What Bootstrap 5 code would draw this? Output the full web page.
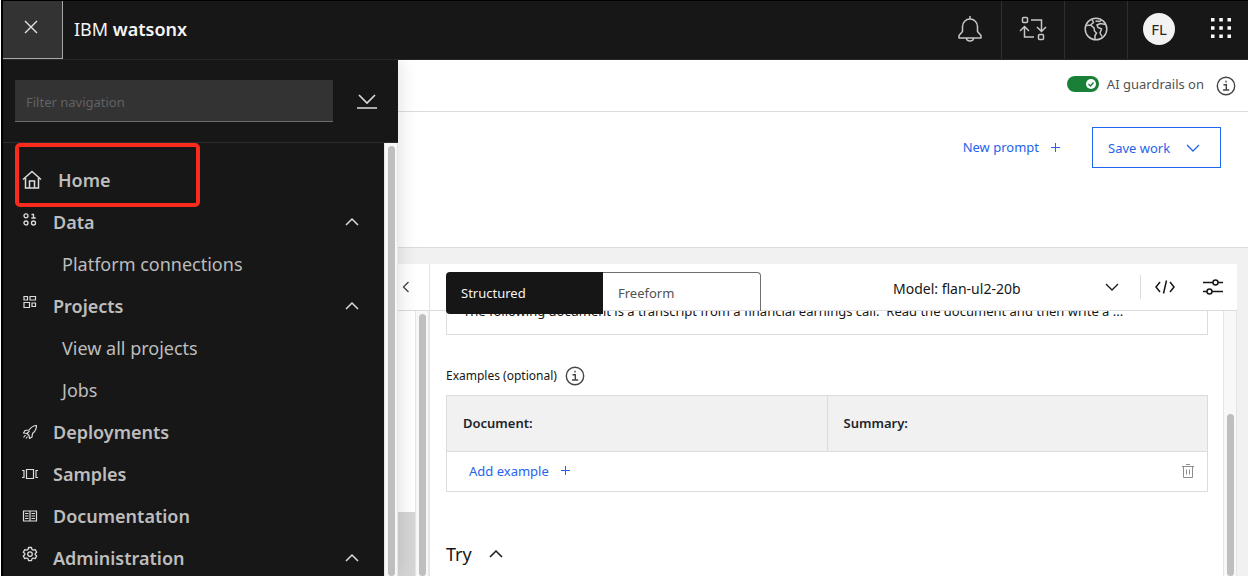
<!DOCTYPE html>
<html lang="en">
<head>
<meta charset="utf-8">
<meta name="viewport" content="width=device-width, initial-scale=1">
<title>IBM watsonx</title>
<link href="https://cdn.jsdelivr.net/npm/bootstrap@5.3.0/dist/css/bootstrap.min.css" rel="stylesheet">
<style>
:root{--ink:#161616;--shade:#333;--line:#dcdcdc;--mist:#f1f1f1;--blue:#2563eb}
body{font-family:"Noto Sans","Liberation Sans",sans-serif;font-size:13px;line-height:20px;color:var(--ink)}
svg{display:block;fill:none;stroke:currentColor;flex:none}
button{border:0;background:none;padding:0;color:inherit}
.app-shell{border-left:2px solid #000;margin-left:1px}
.top-bar{height:60px;background:#171717;border-top:1px solid #000;border-bottom:1px solid #262626;color:#c6c6c6}
.close-btn{width:60px;background:#333;border-right:1px solid #a8a8a8;border-bottom:1px solid #a8a8a8;color:#e4e4e4;padding:0 4px 5px 0}
.brand-name{font-size:18px;color:#f4f4f4;margin-left:11px;padding-bottom:3px}
.bar-cell{width:63px;border-right:1px solid #2e2e2e;padding-bottom:3px}
.bar-cell.open-cell{border-right-color:transparent}
.user-badge{width:32px;height:32px;background:#f2f2f2;color:#262626;font-size:15px}
.apps-btn{padding:0 16px 4px 19px}
.side-nav{width:395px;background:#171717;color:#bdbdbd;box-shadow:0 0 20px rgba(0,0,0,.14)}
.side-nav svg{color:#dcdcdc}
.filter-row{height:83px;padding:0 21px 0 12px;border-bottom:1px solid #2c2c2c}
.filter-box{width:318px;height:42px;background:#333;border:0;border-bottom:1px solid #6a6a6a;border-radius:0;color:#eee;font-size:13px;padding:3px 11px 0}
.filter-box::placeholder{color:#626262}
.nav-list{padding-top:16px;min-width:0}
.nav-row{height:42px;padding:0 24px 0 19px;color:inherit;font-size:18px;font-weight:600;text-decoration:none;width:100%}
.nav-row svg:first-child{width:16px;margin-right:15px}
.nav-row.home-row svg:first-child{width:20px;margin-right:16px}
.nav-row.child-row{padding-left:59px;font-weight:400}
.mark-box{left:12px;top:0;width:185px;height:64px;border:4px solid #fa2a1d;border-radius:5px}
.track{width:14px;background:#f8f8f8;border-left:1px solid #e6e6e6;border-right:1px solid #e6e6e6;padding:3px 2px 0 3px}
.thumb{background:#bfbfbf;border-radius:4px}
.thumb.partial{height:62%}
.guard-row{height:52px;border-bottom:1px solid var(--line);padding-right:12px;color:#525252}
.guard-switch{width:32px!important;height:16px;margin:0!important;border:0;background-color:#198038!important;
 background-image:url("data:image/svg+xml,%3csvg xmlns='http://www.w3.org/2000/svg' viewBox='0 0 16 16'%3e%3ccircle cx='8' cy='8' r='5' fill='white'/%3e%3cpath d='M5.5 8l2 2 3-3.5' fill='none' stroke='%23198038' stroke-width='1.3'/%3e%3c/svg%3e")!important;background-size:16px 16px}
.action-row{height:136px;border-bottom:1px solid var(--line);padding:15px 27px 0 0;color:var(--blue)}
.prompt-btn{padding:10px 8px 0;margin-right:24px}
.save-btn{width:129px;height:41px;border:1px solid #1f66f0;padding:0 20px 0 15px}
.work-area{background:var(--mist);padding:16px 11px 0 0}
.rail-col{width:32px;border-right:1px solid #e4e4e4}
.tool-row{height:47px;border-bottom:1px solid var(--line)}
.rail-fill{background:#d6d6d6;height:64px}
.mode-tab{width:157px;height:39px;padding:2px 0 0 15px;text-align:left}
.mode-tab.on{background:var(--ink);color:#f4f4f4;border-radius:4px 0 0 4px;height:42px;padding-top:0}
.mode-tab.off{border:1px solid #6f6f6f;border-bottom:0;border-left:0;border-radius:0 4px 0 0;color:#525252;width:158px}
.tab-set{padding:8px 0 0 16px;z-index:2}
.model-pick{width:245px;height:34px;border:0;border-radius:0;font-size:14px;padding:2px 32px 0 6px;color:var(--ink);
 background:#fff url("data:image/svg+xml,%3csvg xmlns='http://www.w3.org/2000/svg' viewBox='0 0 16 16'%3e%3cpath d='M2 5l6 6 6-6' fill='none' stroke='%23161616' stroke-width='1.3'/%3e%3c/svg%3e") no-repeat right 12px center/16px 16px}
.tool-rule{width:1px;height:24px;background:#dcdcdc}
.code-btn{padding:0 14px}
.tune-btn{padding:0 14px}
.prompt-box{height:48px;margin-top:-24px;border:1px solid var(--line);padding:13px 16px 0;font-size:13px}
.doc-body{padding:0 15px 0 16px}
.example-head{padding:31px 0 9px}
.example-table{border:1px solid var(--line);margin:0;table-layout:fixed}
.example-table th{height:56px;background:var(--mist);padding:0 16px 2px;border:1px solid var(--line);vertical-align:middle;font-weight:600}
.example-table td{height:40px;padding:0 12px 2px 22px;border:0;color:var(--blue);vertical-align:middle}
.bin-btn{color:#8d8d8d}
.label-text{font-size:12px}
.info-icon{color:#444}
.try-btn{font-size:18px;margin-top:52px}
</style>
</head>
<body>
<div class="app-shell d-flex flex-column vh-100 overflow-hidden">
  <header class="top-bar d-flex flex-shrink-0">
    <button class="close-btn d-flex align-items-center justify-content-center" aria-label="Close menu">
      <svg width="16" height="16" viewBox="0 0 16 16" stroke-width="1.4"><path d="M2 2l12 12M14 2L2 14"/></svg>
    </button>
    <div class="brand-name d-flex align-items-center me-auto"><span>IBM <strong class="fw-semibold">watsonx</strong></span></div>
    <button class="bar-cell d-flex align-items-center justify-content-center" aria-label="Notifications">
      <svg width="26" height="26" viewBox="0 0 26 26" stroke-width="1.5" stroke-linejoin="round"><path d="M13 0v3M13 3a7.500 7.500 0 0 0-7.500 7.500v5L2 19.500V22h22v-2.500l-3.500-4v-5A7.500 7.500 0 0 0 13 3zM9.500 22a3.500 3 0 0 0 7 0"/></svg>
    </button>
    <button class="bar-cell d-flex align-items-center justify-content-center" aria-label="Switch workspace">
      <svg width="28" height="26" viewBox="0 0 28 26" stroke-width="1.500"><rect x="3.500" y="1.500" width="5" height="5" rx="1"/><rect x="19.500" y="18.500" width="5" height="5" rx="1"/><path d="M12 4h10.500v11M18 11l4.500 4.500L27 11M15 21H5.500V10.500M1 15l4.500-4.500L10 15"/></svg>
    </button>
    <button class="bar-cell d-flex align-items-center justify-content-center" aria-label="Region">
      <svg width="24" height="24" viewBox="0 0 24 24" stroke-width="1.500"><circle cx="12" cy="12" r="10.800"/><path d="M2.500 8.500L6.500 8l3.500 3 .5 3 2 2-1.500 2.500V22.500M8 2.500l1.500 3L6.500 8M17.500 3l-2 1.500-4-.5M21.500 7.500l-5-1-3.500 1.500 1 2.500 3.500 1.500L16 16l2 3.500"/></svg>
    </button>
    <button class="bar-cell open-cell d-flex align-items-center justify-content-center" aria-label="Account">
      <span class="user-badge rounded-circle d-flex align-items-center justify-content-center">FL</span>
    </button>
    <button class="apps-btn d-flex align-items-center justify-content-center text-white" aria-label="App switcher">
      <svg width="22" height="22" viewBox="0 0 22 22" stroke="none"><path fill="currentColor" stroke="none" d="M1 1h3.500v3.500H1zM9.300 1h3.500v3.500H9.300zM17.500 1H21v3.500h-3.500zM1 9.300h3.500v3.500H1zM9.300 9.300h3.500v3.500H9.300zM17.500 9.300H21v3.500h-3.500zM1 17.500h3.500V21H1zM9.300 17.500h3.500V21H9.300zM17.500 17.500H21V21h-3.500z"/></svg>
    </button>
  </header>

  <div class="d-flex flex-grow-1 overflow-hidden">
    <nav class="side-nav d-flex flex-column flex-shrink-0 position-relative z-3" aria-label="Main">
      <div class="filter-row d-flex align-items-center justify-content-between flex-shrink-0">
        <input class="filter-box" type="text" placeholder="Filter navigation" aria-label="Filter navigation">
        <button aria-label="Collapse all">
          <svg width="20" height="18" viewBox="0 0 20 18" stroke-width="1.600"><path d="M2 3l8 8 8-8M0 16h20"/></svg>
        </button>
      </div>
      <div class="d-flex flex-grow-1 overflow-hidden position-relative">
        <div class="nav-list flex-grow-1">
          <a class="nav-row home-row d-flex align-items-center" href="#home">
            <svg width="20" height="20" viewBox="0 0 20 20" stroke-width="1.500"><path d="M1 9.500L10 1.500l9 8M3.500 8v10h13V8M7.500 18v-7h5v7"/></svg>Home</a>
          <button class="nav-row d-flex align-items-center">
            <svg class="mb-1" width="16" height="16" viewBox="0 0 16 16" stroke-width="1.300"><circle cx="4" cy="3.800" r="2"/><circle cx="4" cy="11" r="2"/><circle cx="11.500" cy="11" r="2"/><path d="M9.500 2.500h2V6M9.300 6h4.400"/></svg>
            <span class="me-auto">Data</span>
            <svg width="16" height="16" viewBox="0 0 16 16" stroke-width="1.500"><path d="M2 11l6-6 6 6"/></svg></button>
          <a class="nav-row child-row d-flex align-items-center" href="#connections">Platform connections</a>
          <button class="nav-row d-flex align-items-center">
            <svg class="mb-2" width="16" height="16" viewBox="0 0 16 16" stroke-width="1.200"><path d="M2 2.500h3.500V6H2zM8 2.500h5.500V6H8zM2 8.500h5.500v5H2zM10 9h3.500v3.500H10z"/></svg>
            <span class="me-auto">Projects</span>
            <svg width="16" height="16" viewBox="0 0 16 16" stroke-width="1.500"><path d="M2 11l6-6 6 6"/></svg></button>
          <a class="nav-row child-row d-flex align-items-center" href="#projects">View all projects</a>
          <a class="nav-row child-row d-flex align-items-center" href="#jobs">Jobs</a>
          <a class="nav-row d-flex align-items-center" href="#deployments">
            <svg width="16" height="16" viewBox="0 0 16 16" stroke-width="1.200" stroke-linejoin="round"><path d="M14.500 1.500C10.500 1.500 8.500 4 7 6L3 6.500 1.500 9 5 9.500 7 11.500 7.500 14.500 10 13 10.500 9.500C12.500 8 14.500 6 14.500 1.500zM5 9.500L7.500 7M3.500 11l-2 2.500M5.500 12.500L4 14.500"/></svg>Deployments</a>
          <a class="nav-row d-flex align-items-center" href="#samples">
            <svg width="16" height="16" viewBox="0 0 16 16" stroke-width="1.200"><path d="M4.500 3.500h7v9h-7zM0 4.500h2v7H0M16 4.500h-2v7h2"/></svg>Samples</a>
          <a class="nav-row d-flex align-items-center" href="#documentation">
            <svg width="16" height="16" viewBox="0 0 16 16" stroke-width="1.200"><path d="M1.500 3h13v10h-13zM8 3v10M3 5.500h3.500M3 8h3.500M3 10.500h3.500M9.500 5.500H13M9.500 8H13M9.500 10.500H13"/></svg>Documentation</a>
          <button class="nav-row d-flex align-items-center">
            <svg class="mb-2" width="16" height="16" viewBox="0 0 16 16" stroke-width="1.300" stroke-linejoin="round"><path d="M6.500 1.500h3l.5 2 1.200.7 2-.6 1.500 2.600L13.200 7.500v1.200l1.500 1.300-1.500 2.600-2-.6-1.200.7-.5 2h-3l-.5-2-1.200-.7-2 .6L1.300 10l1.500-1.300V7.500L1.300 6.200l1.500-2.600 2 .6L6 3.500z"/><circle cx="8" cy="8.100" r="2.300"/></svg>
            <span class="me-auto">Administration</span>
            <svg width="16" height="16" viewBox="0 0 16 16" stroke-width="1.500"><path d="M2 11l6-6 6 6"/></svg></button>
        </div>
        <div class="track flex-shrink-0"><div class="thumb h-100"></div></div>
        <div class="mark-box position-absolute pe-none"></div>
      </div>
    </nav>

    <main class="d-flex flex-column flex-grow-1 overflow-hidden">
      <div class="guard-row d-flex align-items-center justify-content-end flex-shrink-0">
        <div class="form-switch d-flex align-items-center p-0 m-0 pb-1">
          <input class="form-check-input guard-switch" type="checkbox" role="switch" id="guard" checked>
          <label for="guard" class="ms-2">AI guardrails on</label>
        </div>
        <button class="info-icon ms-2 ps-1" aria-label="About AI guardrails">
          <svg width="20" height="20" viewBox="0 0 20 20" stroke-width="1.400"><circle cx="10" cy="10" r="8.700"/><path d="M7.500 8.700h2.800v5M7 14h6.200M10 4.800v1.800"/></svg>
        </button>
      </div>
      <div class="action-row d-flex align-items-start justify-content-end flex-shrink-0">
        <button class="prompt-btn d-flex align-items-center gap-2"><span class="me-1">New prompt</span>
          <svg width="9" height="9" viewBox="0 0 9 9"><path d="M4.500 0v9M0 4.500h9"/></svg></button>
        <button class="save-btn d-flex align-items-center justify-content-between">Save work
          <svg width="14" height="14" viewBox="0 0 14 14" stroke-width="1.300"><path d="M1 4l6 6 6-6"/></svg></button>
      </div>
      <div class="work-area flex-grow-1 overflow-hidden">
        <div class="d-flex h-100 bg-white">
          <div class="rail-col d-flex flex-column flex-shrink-0">
            <div class="tool-row d-flex align-items-center flex-shrink-0">
              <button class="info-icon" aria-label="Collapse panel"><svg width="16" height="16" viewBox="0 0 16 16" stroke-width="1.300"><path d="M10.500 3l-5 5 5 5"/></svg></button>
            </div>
            <div class="d-flex flex-grow-1">
              <div class="flex-grow-1 d-flex flex-column justify-content-end"><div class="rail-fill"></div></div>
              <div class="track flex-shrink-0"><div class="thumb h-100"></div></div>
            </div>
          </div>
          <section class="d-flex flex-column flex-grow-1 overflow-hidden">
            <div class="tool-row d-flex flex-shrink-0">
              <div class="tab-set d-flex align-items-start position-relative" role="tablist">
                <button class="mode-tab on" role="tab" aria-selected="true">Structured</button>
                <button class="mode-tab off" role="tab" aria-selected="false">Freeform</button>
              </div>
              <div class="d-flex align-items-center ms-auto">
                <select class="model-pick form-select" aria-label="Model"><option>Model: flan-ul2-20b</option></select>
                <span class="tool-rule ms-2"></span>
                <button class="code-btn" aria-label="View code"><svg width="20" height="20" viewBox="0 0 20 20" stroke-width="1.500"><path d="M5 5l-4 5 4 5M15 5l4 5-4 5M11.500 3.500l-3 13"/></svg></button>
                <button class="tune-btn" aria-label="Model parameters"><svg width="20" height="20" viewBox="0 0 20 20" stroke-width="1.500"><path d="M0 5.500h10M15 5.500h5M0 14.500h4M9 14.500h11"/><circle cx="12.500" cy="5.500" r="2.500"/><circle cx="6.500" cy="14.500" r="2.500"/></svg></button>
              </div>
            </div>
            <div class="d-flex flex-grow-1 overflow-hidden">
              <div class="doc-body flex-grow-1 overflow-hidden">
                <div class="prompt-box text-truncate">The following document is a transcript from a financial earnings call.&nbsp; Read the document and then write a ...</div>
                <div class="example-head d-flex align-items-center gap-2">
                  <span class="label-text">Examples (optional)</span>
                  <button class="info-icon" aria-label="About examples"><svg width="20" height="20" viewBox="0 0 20 20" stroke-width="1.400"><circle cx="10" cy="10" r="8.700"/><path d="M7.500 8.700h2.800v5M7 14h6.200M10 4.800v1.800"/></svg></button>
                </div>
                <table class="example-table table">
                  <thead><tr><th scope="col">Document:</th><th scope="col">Summary:</th></tr></thead>
                  <tbody><tr><td colspan="2"><div class="d-flex align-items-center justify-content-between">
                    <button class="d-flex align-items-center gap-2"><span class="me-1">Add example</span>
                      <svg width="9" height="9" viewBox="0 0 9 9"><path d="M4.500 0v9M0 4.500h9"/></svg></button>
                    <button class="bin-btn" aria-label="Delete example"><svg width="14" height="16" viewBox="0 0 14 16"><path d="M1 3.500h12M5 1.500h4M2.500 3.500v11h9v-11M5.500 6.500v5M8.500 6.500v5"/></svg></button>
                  </div></td></tr></tbody>
                </table>
                <button class="try-btn d-flex align-items-center gap-3">Try
                  <svg width="16" height="16" viewBox="0 0 16 16" stroke-width="1.500"><path d="M2 11l6-6 6 6"/></svg></button>
              </div>
              <div class="track flex-shrink-0 d-flex flex-column justify-content-end"><div class="thumb partial"></div></div>
            </div>
          </section>
        </div>
      </div>
    </main>
  </div>
</div>
<script src="https://cdn.jsdelivr.net/npm/bootstrap@5.3.0/dist/js/bootstrap.bundle.min.js"></script>
</body>
</html>
